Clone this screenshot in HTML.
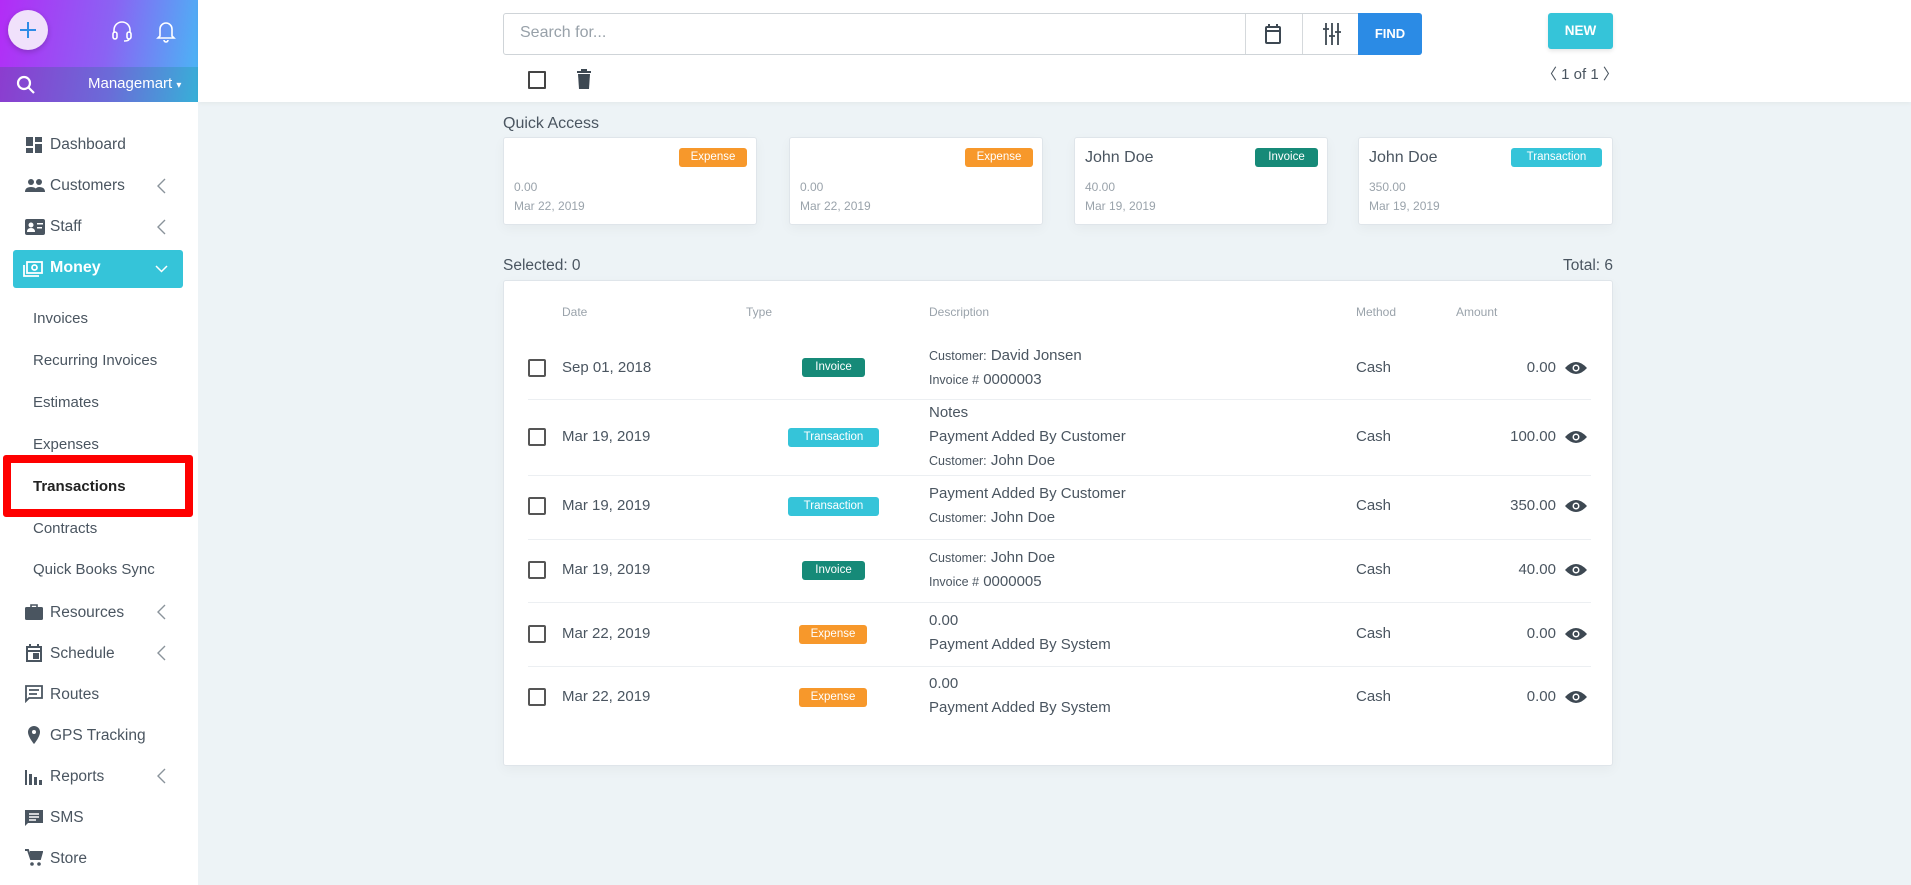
<!DOCTYPE html>
<html><head><meta charset="utf-8"><style>
*{margin:0;padding:0;box-sizing:border-box}
body{width:1911px;height:885px;overflow:hidden;background:#edf3f6;font-family:"Liberation Sans",sans-serif;color:#3d4852;position:relative}
.a{position:absolute}
#side{left:0;top:0;width:198px;height:885px;background:#fff}
.top1{left:0;top:0;width:198px;height:67px;background:linear-gradient(100deg,#b32cf6 0%,#8a63f3 55%,#4cb3f5 100%)}
.top2{left:0;top:67px;width:198px;height:35px;background:linear-gradient(100deg,#8c3ccf 0%,#6b6bd8 55%,#37b0d8 100%)}
.mi{position:absolute;left:50px;font-size:15.5px;color:#4a5560}
.sub{position:absolute;left:33px;font-size:15px;color:#4a5560}
.ic{position:absolute;left:25px;width:18px;height:18px}
.chev{position:absolute;left:157px;width:9px;height:16px}
#head{left:198px;top:0;width:1713px;height:102px;background:#fff;box-shadow:0 2px 4px rgba(0,0,0,.04)}
.card{position:absolute;background:#fff;border:1px solid #dfe5ea;border-radius:3px;box-shadow:0 4px 12px rgba(0,0,0,.04)}
.badge{position:absolute;color:#fff;font-size:11.5px;border-radius:3px;text-align:center;line-height:19px;height:19px}
.exp{background:#f7982b}.inv{background:#168a78}.trn{background:#35c4d9}
.sm{font-size:12px;color:#9aa3ab}
.cb{position:absolute;left:528px;width:18px;height:18px;border:2px solid #555;border-radius:2px}
.row{position:absolute;font-size:15px;color:#4a5560}
.line{position:absolute;left:528px;width:1063px;height:1px;background:#eceff2}
.eye{position:absolute;left:1565px;width:22px;height:14px}
.th{position:absolute;top:305px;font-size:12px;color:#9aa3ab}
.d{position:absolute;left:929px;font-size:15px;color:#4a5560;line-height:24px}
.d small{font-size:12.5px}
</style></head><body>
<div id="side" class="a"></div>
<div class="a top1"></div>
<div class="a top2"></div>
<div class="a" style="left:8px;top:10px;width:40px;height:40px;border-radius:50%;background:#f0e1fb;box-shadow:0 2px 6px rgba(0,0,0,.2)"></div>
<svg class="a" style="left:19px;top:21px" width="18" height="18" viewBox="0 0 18 18" stroke="#2f8be6" stroke-width="2"><path d="M9 1v16M1 9h16"/></svg>
<svg class="a" style="left:111px;top:19px" width="22" height="24" viewBox="0 0 22 24" fill="none" stroke="#fff" stroke-width="1.6"><path d="M3 14V11a8 8 0 0 1 16 0v3"/><rect x="2" y="13" width="4" height="7" rx="2"/><rect x="16" y="13" width="4" height="7" rx="2"/><path d="M18 20q0 2-5 2"/></svg>
<svg class="a" style="left:156px;top:19px" width="20" height="24" viewBox="0 0 20 24" fill="none" stroke="#fff" stroke-width="1.6"><path d="M4 17V10a6 6 0 0 1 12 0v7l2 2H2z"/><path d="M8 21a2 2 0 0 0 4 0"/></svg>
<svg class="a" style="left:16px;top:75px" width="20" height="20" viewBox="0 0 20 20" fill="none" stroke="#fff" stroke-width="2.2"><circle cx="8" cy="8" r="6"/><path d="M12.5 12.5L18 18"/></svg>
<div class="a" style="left:88px;top:75px;color:#fff;font-size:15px">Managemart <span style="font-size:10px">▾</span></div>

<svg class="ic" style="top:136px" viewBox="0 0 18 18" fill="#4a5560"><rect x="1" y="1" width="7" height="9"/><rect x="10" y="1" width="7" height="5"/><rect x="1" y="12" width="7" height="5"/><rect x="10" y="8" width="7" height="9"/></svg>
<div class="mi" style="top:136px">Dashboard</div>
<svg class="ic" style="top:177px;width:20px" viewBox="0 0 20 18" fill="#4a5560"><circle cx="6" cy="5" r="3"/><circle cx="14" cy="5" r="3"/><path d="M0 15q0-5 6-5t6 5zM10 15q0-5 4-5 6 0 6 5z"/></svg>
<div class="mi" style="top:177px">Customers</div><svg class="chev" style="top:178px" viewBox="0 0 9 16" fill="none" stroke="#8a939b" stroke-width="1.4"><path d="M8 1L1 8l7 7"/></svg>
<svg class="ic" style="top:218px;width:20px" viewBox="0 0 20 18" fill="#4a5560"><rect x="0" y="1" width="20" height="16" rx="2"/><circle cx="6" cy="7" r="2.5" fill="#fff"/><path d="M2 14q0-4 4-4t4 4z" fill="#fff"/><rect x="12" y="5" width="6" height="1.5" fill="#fff"/><rect x="12" y="9" width="5" height="1.5" fill="#fff"/></svg>
<div class="mi" style="top:218px">Staff</div><svg class="chev" style="top:219px" viewBox="0 0 9 16" fill="none" stroke="#8a939b" stroke-width="1.4"><path d="M8 1L1 8l7 7"/></svg>
<div class="a" style="left:13px;top:250px;width:170px;height:38px;background:#35c4d9;border-radius:3px"></div>
<svg class="a" style="left:23px;top:261px" width="20" height="17" viewBox="0 0 20 17" fill="none" stroke="#fff" stroke-width="1.8"><rect x="4" y="1" width="15" height="11"/><circle cx="11.5" cy="6.5" r="2.5"/><path d="M1 4v11h15"/></svg>
<div class="a" style="left:50px;top:259px;color:#fff;font-size:16px;font-weight:bold">Money</div>
<svg class="a" style="left:155px;top:265px" width="13" height="8" viewBox="0 0 13 8" fill="none" stroke="#fff" stroke-width="1.5"><path d="M1 1l5.5 5.5L12 1"/></svg>

<div class="sub" style="top:310px">Invoices</div>
<div class="sub" style="top:352px">Recurring Invoices</div>
<div class="sub" style="top:394px">Estimates</div>
<div class="sub" style="top:436px">Expenses</div>
<div class="a" style="left:3px;top:455px;width:190px;height:62px;border:8px solid #fe0000;border-radius:3px"></div>
<div class="sub" style="top:478px;color:#222;font-weight:bold">Transactions</div>
<div class="sub" style="top:520px">Contracts</div>
<div class="sub" style="top:561px">Quick Books Sync</div>

<svg class="ic" style="top:603px" viewBox="0 0 18 18" fill="#4a5560"><rect x="0" y="4" width="18" height="13" rx="1.5"/><path d="M6 4V2h6v2" fill="none" stroke="#4a5560" stroke-width="1.6"/></svg>
<div class="mi" style="top:604px">Resources</div><svg class="chev" style="top:604px" viewBox="0 0 9 16" fill="none" stroke="#8a939b" stroke-width="1.4"><path d="M8 1L1 8l7 7"/></svg>
<svg class="ic" style="top:644px" viewBox="0 0 18 18" fill="none" stroke="#4a5560" stroke-width="2"><rect x="2" y="3" width="14" height="14"/><path d="M2 7h14M5 0v4M13 0v4"/><rect x="9" y="10" width="4" height="4" fill="#4a5560"/></svg>
<div class="mi" style="top:645px">Schedule</div><svg class="chev" style="top:645px" viewBox="0 0 9 16" fill="none" stroke="#8a939b" stroke-width="1.4"><path d="M8 1L1 8l7 7"/></svg>
<svg class="ic" style="top:685px" viewBox="0 0 18 18" fill="none" stroke="#4a5560" stroke-width="1.8"><path d="M1 1h16v12H4l-3 3z"/><path d="M4 5h10M4 9h8"/></svg>
<div class="mi" style="top:686px">Routes</div>
<svg class="ic" style="top:726px" viewBox="0 0 18 18" fill="#4a5560"><path d="M9 0a6 6 0 0 1 6 6c0 5-6 12-6 12S3 11 3 6a6 6 0 0 1 6-6z"/><circle cx="9" cy="6" r="2" fill="#fff"/></svg>
<div class="mi" style="top:727px">GPS Tracking</div>
<svg class="ic" style="top:768px" viewBox="0 0 18 18" fill="#4a5560"><rect x="0" y="2" width="2" height="15"/><rect x="4" y="6" width="3" height="11"/><rect x="9" y="9" width="3" height="8"/><rect x="14" y="12" width="3" height="5"/></svg>
<div class="mi" style="top:768px">Reports</div><svg class="chev" style="top:768px" viewBox="0 0 9 16" fill="none" stroke="#8a939b" stroke-width="1.4"><path d="M8 1L1 8l7 7"/></svg>
<svg class="ic" style="top:809px" viewBox="0 0 18 18" fill="#4a5560"><path d="M0 1h18v13H3l-3 3z"/><path d="M4 5h10M4 8h10M4 11h7" stroke="#fff" stroke-width="1.5"/></svg>
<div class="mi" style="top:809px">SMS</div>
<svg class="ic" style="top:849px" viewBox="0 0 18 18" fill="#4a5560"><path d="M0 1h3l3 9h9l2-7H5" fill="none" stroke="#4a5560" stroke-width="2"/><path d="M5 4h12l-2 6H6z"/><circle cx="7" cy="15" r="1.8"/><circle cx="14" cy="15" r="1.8"/></svg>
<div class="mi" style="top:850px">Store</div>

<div id="head" class="a"></div>
<div class="a" style="left:503px;top:13px;width:919px;height:42px;border:1.5px solid #cfd4d8;border-radius:3px;background:#fff"></div>
<div class="a" style="left:520px;top:24px;font-size:16px;color:#98a1a9">Search for...</div>
<div class="a" style="left:1245px;top:14px;width:1px;height:40px;background:#d5d9dc"></div>
<div class="a" style="left:1302px;top:14px;width:1px;height:40px;background:#d5d9dc"></div>
<svg class="a" style="left:1264px;top:24px" width="18" height="20" viewBox="0 0 18 20" fill="none" stroke="#3d4852" stroke-width="2"><rect x="2" y="3" width="14" height="16" rx="1"/><path d="M2 7h14M5 0v4M13 0v4"/></svg>
<svg class="a" style="left:1322px;top:23px" width="20" height="22" viewBox="0 0 20 22" stroke="#3d4852" stroke-width="1.8"><path d="M4 0v22M10 0v22M16 0v22"/><path d="M1 6h6M7 13h6M13 9h6"/></svg>
<div class="a" style="left:1358px;top:13px;width:64px;height:42px;background:#2b8be5;border-radius:0 3px 3px 0;color:#fff;font-size:13px;font-weight:bold;text-align:center;line-height:42px">FIND</div>
<div class="a" style="left:1548px;top:13px;width:65px;height:36px;background:#35c4d9;border-radius:3px;color:#fff;font-size:13.5px;font-weight:bold;text-align:center;line-height:36px;box-shadow:0 2px 4px rgba(0,0,0,.1)">NEW</div>
<div class="a" style="left:1542px;top:63px;font-size:15px;color:#4a5560">〈 1 of 1 〉</div>
<div class="a" style="left:528px;top:71px;width:18px;height:18px;border:2px solid #444;border-radius:1px"></div>
<svg class="a" style="left:577px;top:69px" width="14" height="20" viewBox="0 0 14 20" fill="#3d4852"><rect x="0" y="2" width="14" height="2"/><rect x="4" y="0" width="6" height="2"/><path d="M1 5h12l-1 15H2z"/></svg>

<div class="a" style="left:503px;top:115px;font-size:16px;color:#4a5560">Quick Access</div>
<div class="card" style="left:503px;top:137px;width:254px;height:88px"><div class="badge exp" style="left:175px;top:10px;width:68px">Expense</div><div class="a sm" style="left:10px;top:42px">0.00</div><div class="a sm" style="left:10px;top:61px">Mar 22, 2019</div></div>
<div class="card" style="left:789px;top:137px;width:254px;height:88px"><div class="badge exp" style="left:175px;top:10px;width:68px">Expense</div><div class="a sm" style="left:10px;top:42px">0.00</div><div class="a sm" style="left:10px;top:61px">Mar 22, 2019</div></div>
<div class="card" style="left:1074px;top:137px;width:254px;height:88px"><div class="a" style="left:10px;top:11px;font-size:16px;color:#4a5560">John Doe</div><div class="badge inv" style="left:180px;top:10px;width:63px">Invoice</div><div class="a sm" style="left:10px;top:42px">40.00</div><div class="a sm" style="left:10px;top:61px">Mar 19, 2019</div></div>
<div class="card" style="left:1358px;top:137px;width:255px;height:88px"><div class="a" style="left:10px;top:11px;font-size:16px;color:#4a5560">John Doe</div><div class="badge trn" style="left:152px;top:10px;width:91px">Transaction</div><div class="a sm" style="left:10px;top:42px">350.00</div><div class="a sm" style="left:10px;top:61px">Mar 19, 2019</div></div>

<div class="a" style="left:503px;top:257px;font-size:15.5px;color:#4a5560">Selected: 0</div>
<div class="a" style="left:1500px;top:257px;width:113px;text-align:right;font-size:15.5px;color:#4a5560">Total: 6</div>
<div class="card" style="left:503px;top:280px;width:1110px;height:486px"></div>
<div class="th" style="left:562px">Date</div><div class="th" style="left:746px">Type</div><div class="th" style="left:929px">Description</div><div class="th" style="left:1356px">Method</div><div class="th" style="left:1456px">Amount</div>

<div class="line" style="top:399px"></div><div class="line" style="top:475px"></div><div class="line" style="top:539px"></div><div class="line" style="top:602px"></div><div class="line" style="top:666px"></div>

<div class="cb" style="top:359px"></div><div class="row" style="left:562px;top:359px">Sep 01, 2018</div><div class="badge inv" style="left:802px;top:358px;width:63px">Invoice</div>
<div class="d" style="top:344px"><small>Customer:</small> David Jonsen<br><small>Invoice #</small> 0000003</div>
<div class="row" style="left:1356px;top:359px">Cash</div><div class="row" style="left:1506px;top:359px;width:50px;text-align:right">0.00</div>

<div class="cb" style="top:428px"></div><div class="row" style="left:562px;top:428px">Mar 19, 2019</div><div class="badge trn" style="left:788px;top:428px;width:91px">Transaction</div>
<div class="d" style="top:401px">Notes<br>Payment Added By Customer<br><small>Customer:</small> John Doe</div>
<div class="row" style="left:1356px;top:428px">Cash</div><div class="row" style="left:1496px;top:428px;width:60px;text-align:right">100.00</div>

<div class="cb" style="top:497px"></div><div class="row" style="left:562px;top:497px">Mar 19, 2019</div><div class="badge trn" style="left:788px;top:497px;width:91px">Transaction</div>
<div class="d" style="top:482px">Payment Added By Customer<br><small>Customer:</small> John Doe</div>
<div class="row" style="left:1356px;top:497px">Cash</div><div class="row" style="left:1496px;top:497px;width:60px;text-align:right">350.00</div>

<div class="cb" style="top:561px"></div><div class="row" style="left:562px;top:561px">Mar 19, 2019</div><div class="badge inv" style="left:802px;top:561px;width:63px">Invoice</div>
<div class="d" style="top:546px"><small>Customer:</small> John Doe<br><small>Invoice #</small> 0000005</div>
<div class="row" style="left:1356px;top:561px">Cash</div><div class="row" style="left:1496px;top:561px;width:60px;text-align:right">40.00</div>

<div class="cb" style="top:625px"></div><div class="row" style="left:562px;top:625px">Mar 22, 2019</div><div class="badge exp" style="left:799px;top:625px;width:68px">Expense</div>
<div class="d" style="top:609px">0.00<br>Payment Added By System</div>
<div class="row" style="left:1356px;top:625px">Cash</div><div class="row" style="left:1496px;top:625px;width:60px;text-align:right">0.00</div>

<div class="cb" style="top:688px"></div><div class="row" style="left:562px;top:688px">Mar 22, 2019</div><div class="badge exp" style="left:799px;top:688px;width:68px">Expense</div>
<div class="d" style="top:672px">0.00<br>Payment Added By System</div>
<div class="row" style="left:1356px;top:688px">Cash</div><div class="row" style="left:1496px;top:688px;width:60px;text-align:right">0.00</div>

<svg class="eye" style="top:361px" viewBox="0 0 22 14"><path d="M0 7Q11-5 22 7Q11 19 0 7z" fill="#3d4852"/><circle cx="11" cy="7" r="3.5" fill="#fff"/><circle cx="11" cy="7" r="2" fill="#3d4852"/></svg>
<svg class="eye" style="top:430px" viewBox="0 0 22 14"><path d="M0 7Q11-5 22 7Q11 19 0 7z" fill="#3d4852"/><circle cx="11" cy="7" r="3.5" fill="#fff"/><circle cx="11" cy="7" r="2" fill="#3d4852"/></svg>
<svg class="eye" style="top:499px" viewBox="0 0 22 14"><path d="M0 7Q11-5 22 7Q11 19 0 7z" fill="#3d4852"/><circle cx="11" cy="7" r="3.5" fill="#fff"/><circle cx="11" cy="7" r="2" fill="#3d4852"/></svg>
<svg class="eye" style="top:563px" viewBox="0 0 22 14"><path d="M0 7Q11-5 22 7Q11 19 0 7z" fill="#3d4852"/><circle cx="11" cy="7" r="3.5" fill="#fff"/><circle cx="11" cy="7" r="2" fill="#3d4852"/></svg>
<svg class="eye" style="top:627px" viewBox="0 0 22 14"><path d="M0 7Q11-5 22 7Q11 19 0 7z" fill="#3d4852"/><circle cx="11" cy="7" r="3.5" fill="#fff"/><circle cx="11" cy="7" r="2" fill="#3d4852"/></svg>
<svg class="eye" style="top:690px" viewBox="0 0 22 14"><path d="M0 7Q11-5 22 7Q11 19 0 7z" fill="#3d4852"/><circle cx="11" cy="7" r="3.5" fill="#fff"/><circle cx="11" cy="7" r="2" fill="#3d4852"/></svg>
</body></html>
